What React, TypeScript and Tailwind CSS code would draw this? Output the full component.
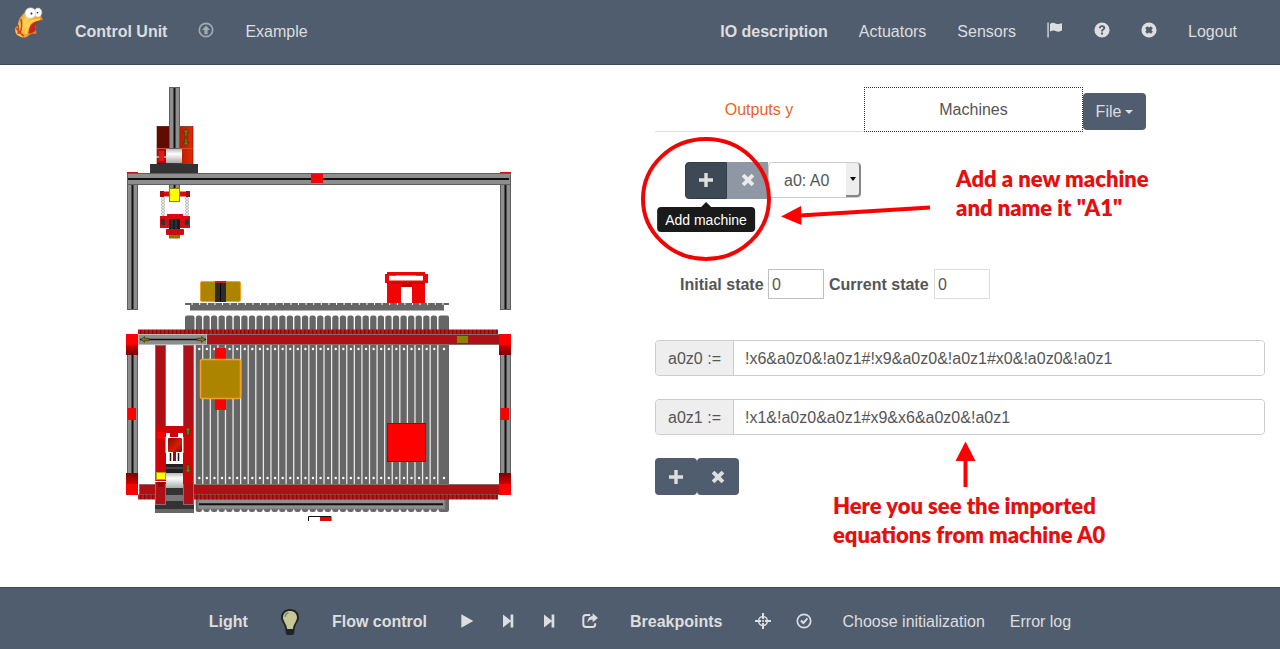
import { useState } from "react";
import type { ReactNode } from "react";

function Icon({ children, label }: { children: ReactNode; label?: string }) {
  return (
    <svg viewBox="0 0 16 16" className="size-4 shrink-0" fill="currentColor" role={label ? "img" : undefined} aria-label={label}>
      {children}
    </svg>
  );
}

const UploadIcon = () => (
  <Icon>
    <circle cx="8" cy="8" r="6.7" fill="none" stroke="currentColor" strokeWidth="1.7" />
    <path d="M8 3.4 12 8H9.6v4.300H6.400V8H4z" />
  </Icon>
);
const FlagIcon = () => (
  <Icon>
    <path d="M.4.6h1.3v15H.4zM3 1.9c2-1.4 3.6-1.3 5.4-.5 1.9.9 3.600.9 6.600-.1v7.300c-2.600 1.500-4.500 1.200-6.500.3C6.700 8.100 5.100 8.300 3 9.600z" />
  </Icon>
);
const QuestionIcon = () => (
  <Icon>
    <path
      fillRule="evenodd"
      d="M8 .4a7.600 7.600 0 1 1 0 15.200A7.600 7.600 0 0 1 8 .4zM4.900 6.200h2c0-.8.4-1.200 1.200-1.200.7 0 1.100.4 1.100.9 0 .6-.4.9-1 1.300-.8.600-1.200 1.100-1.200 2.200h1.900c0-.6.4-.9 1-1.300.8-.6 1.300-1.200 1.300-2.300 0-1.500-1.200-2.500-3-2.500-2 0-3.200 1.100-3.300 2.900zM7 10.600v2h2v-2z"
    />
  </Icon>
);
const CloseSignIcon = () => (
  <Icon>
    <path
      fillRule="evenodd"
      d="M8 .4a7.600 7.600 0 1 1 0 15.200A7.600 7.600 0 0 1 8 .4zM6.200 4.200 4.200 6.200 5.600 8l-1.400 1.800 2 2L8 10.400l1.800 1.400 2-2L10.400 8l1.400-1.800-2-2L8 5.600z"
    />
  </Icon>
);
const PlayIcon = () => (
  <Icon>
    <path d="M2.300 1.200 14.300 8l-12 6.800z" />
  </Icon>
);
const StepIcon = () => (
  <Icon>
    <path d="M3 1.500 10.600 7.400V1.500h2.700v13h-2.700V8.600L3 14.500z" />
  </Icon>
);
const ShareIcon = () => (
  <Icon>
    <path
      fill="none"
      stroke="currentColor"
      strokeWidth="2"
      d="M8.200 2H4Q1.300 2 1.300 4.700v6.600Q1.300 14 4 14h6.600q2.600 0 2.600-2.700v-1"
    />
    <path d="M10.600.3 16 4.900l-5.400 4.300V6.600C8 6.600 6.600 7.600 5.500 10c0-4 1.600-6.600 5.100-7z" />
  </Icon>
);
const CrosshairIcon = () => (
  <Icon>
    <path d="M7 0h2v6H7zM7 10h2v6H7zM0 7h6v2H0zM10 7h6v2h-6z" />
    <circle cx="8" cy="8" r="4.400" fill="none" stroke="currentColor" strokeWidth="1.500" />
    <circle cx="8" cy="8" r="1.100" />
  </Icon>
);
const OkCircleIcon = () => (
  <Icon>
    <circle cx="8" cy="8" r="6.700" fill="none" stroke="currentColor" strokeWidth="1.700" />
    <path d="m4.200 8.300 1.500-1.500 1.700 1.600 3.300-3.600 1.400 1.300-4.700 5.300z" />
  </Icon>
);
const PlusIcon = () => (
  <Icon>
    <path d="M6.300 1h3.400v5.300H15v3.400H9.700V15H6.300V9.700H1V6.300h5.300z" />
  </Icon>
);
const RemoveIcon = () => (
  <Icon>
    <path d="M4.400 1.700 8 5.300l3.600-3.600 2.700 2.700L10.700 8l3.600 3.600-2.700 2.700L8 10.700l-3.600 3.600-2.700-2.700L5.300 8 1.700 4.400z" />
  </Icon>
);

function Logo() {
  return (
    <svg viewBox="0 0 30 32" className="h-8 w-[30px]" role="img" aria-label="Home">
      <defs>
        <linearGradient id="fish" x1="0" x2="1" y1=".2" y2=".8">
          <stop offset="0" stopColor="#d9601a" />
          <stop offset=".35" stopColor="#ffd65a" />
          <stop offset=".65" stopColor="#f79a1e" />
          <stop offset="1" stopColor="#e4561c" />
        </linearGradient>
      </defs>
      <path d="M1 22c0-2 2-2 3-4 0-6 4-11 9-14 5-2 11 0 14 5l2 4c-4 0-6 1-8 3 0 4 1 6 1 9l1-1-1 3c-2-1-5-1-8 2-2 2-6 2-9 0-3-1-4-4-4-7z" fill="url(#fish)" />
      <path d="M27 13c-5 1-9 3-11 6-1 4-2 7-1 8l5-2c2-1 2-3 1-5 0-3 2-5 6-7z" fill="#c2281c" />
      <path d="M4 18c1 3 1 6 0 9M7 12c1 4 1 9-1 15M2 21c3 3 4 6 8 8" fill="none" stroke="#c9491a" strokeWidth="1.600" />
      <path d="m11 20 7-6 8-2M12 27c0-4 1-7 4-9" fill="none" stroke="#ffd54f" strokeWidth="2" />
      <ellipse cx="24" cy="5.500" rx="3.800" ry="4.500" fill="#fff" stroke="#c4c4c4" strokeWidth=".5" />
      <ellipse cx="16.500" cy="6" rx="5.500" ry="5.300" fill="#fff" stroke="#c4c4c4" strokeWidth=".5" />
      <circle cx="17.500" cy="6.500" r="1" fill="#222" />
      <circle cx="23.500" cy="5.800" r=".8" fill="#222" />
    </svg>
  );
}

function Bulb() {
  return (
    <svg viewBox="0 0 20 28" className="h-7 w-5">
      <path d="M10 1C4.500 1 1 4.500 1 9.500c0 4 3.500 6.500 4.300 11l.4 4Q6 27 8 27h4q2 0 2.300-2.500l.4-4c.8-4.500 4.300-7 4.300-11C19 4.500 15.500 1 10 1z" fill="#202425" />
      <path d="M10 3C5.800 3 3 5.700 3 9.500c0 3.500 3.500 6.500 4.200 11.500h5.600C13.500 16 17 13 17 9.500 17 5.700 14.200 3 10 3z" fill="#c5c795" />
      <path d="M4.500 9c0-3 1.500-4.500 4-5v1.500C7 6 6 7 6 9z" fill="#858968" />
    </svg>
  );
}

const PITCH = 7.58;
const slats = Array.from({ length: 32 }, (_, i) => 195.8 + i * PITCH);
const studs = [...Array.from({ length: 32 }, (_, i) => 199.3 + i * PITCH), 444];

function Profile({ x, y, w, h }: { x: number; y: number; w: number; h: number }) {
  const upright = h > w;
  return (
    <g>
      <rect x={x + 0.5} y={y + 0.5} width={w - 1} height={h - 1} fill="#8e8e8e" stroke="#606060" />
      {upright ? (
        <rect x={x + w / 2 - 1} y={y + 1} width="2" height={h - 2} fill="#111" />
      ) : (
        <rect x={x + 1} y={y + h / 2 - 1} width={w - 3} height="2" fill="#111" />
      )}
    </g>
  );
}

function Rail({ x, y, w, h }: { x: number; y: number; w: number; h: number }) {
  return <rect x={x + 0.5} y={y + 0.5} width={w - 1} height={h - 1} fill="#ae1015" stroke="#8a6a6a" />;
}

function Arrow({ x, y, turn }: { x: number; y: number; turn: number }) {
  return (
    <path
      transform={`translate(${x} ${y}) rotate(${turn})`}
      d="M0-4 3-.5H1.200V4h-2.400V-.5H-3z"
      fill="#7d7518"
      stroke="#3c3a08"
      strokeWidth=".7"
    />
  );
}

function Plant() {
  return (
    <svg viewBox="120 85 400 440" className="w-[400px] max-w-full" role="img" aria-label="Crane and conveyor model">
      <defs>
        <linearGradient id="redH">
          <stop offset="0" stopColor="#5a0800" />
          <stop offset="1" stopColor="#e62a00" />
        </linearGradient>
        <linearGradient id="motor" x2="1" y2="1">
          <stop offset="0" stopColor="#8a0a00" />
          <stop offset=".6" stopColor="#d81c04" />
          <stop offset="1" stopColor="#8a0a00" />
        </linearGradient>
        <linearGradient id="redDown" x2="0" y2="1">
          <stop offset="0" stopColor="#d40000" />
          <stop offset="1" stopColor="#780000" />
        </linearGradient>
        <linearGradient id="redUp" x2="0" y2="1">
          <stop offset="0" stopColor="#780000" />
          <stop offset="1" stopColor="#d40000" />
        </linearGradient>
        <linearGradient id="drum" x2="0" y2="1">
          <stop offset="0" stopColor="#bbb" />
          <stop offset=".35" stopColor="#fff" />
          <stop offset="1" stopColor="#aaa" />
        </linearGradient>
        <pattern id="teeth" width="4" height="6" patternUnits="userSpaceOnUse">
          <rect width="4" height="6" fill="#d60c12" />
          <rect width="1.400" height="6" fill="#6e1216" />
        </pattern>
        <pattern id="chain" width="4" height="3" patternUnits="userSpaceOnUse">
          <rect width="4" height="3" fill="#eee" />
          <path d="M0 0h2v1.500h2V3H2V1.500H0z" fill="#bbb" />
        </pattern>
      </defs>

      <rect x="157" y="126.500" width="36" height="38" fill="url(#redH)" stroke="#5a1208" strokeWidth=".6" />
      <rect x="157" y="126.500" width="12" height="21.500" fill="#620b02" />
      <path d="M157 148.500h36" stroke="#c9503c" />
      <rect x="157" y="149" width="10" height="14" fill="#b50c08" />
      <rect x="159" y="151" width="5" height="10" fill="#df1d18" />
      <path d="M156 157h3M164 157h3" stroke="#fff" />
      <Profile x={169} y={87} w={11} h={62} />
      <rect x="166" y="149" width="16" height="14" fill="url(#drum)" />
      <Arrow x={186} y={133} turn={0} />
      <Arrow x={186} y={142} turn={180} />
      <rect x="150" y="164" width="48" height="10" fill="#333" />

      <path d="M127 173h11M500 173h11" stroke="#c8141a" strokeWidth="2" />
      <Profile x={127} y={183} w={11} h={127} />
      <Profile x={500} y={183} w={11} h={127} />
      <Profile x={127} y={173} w={384} h={12} />
      <rect x="311" y="174" width="12" height="9" fill="#f00" />

      <Profile x={169} y={184} w={11} h={12} />
      <rect x="160" y="191.500" width="30" height="5" fill="#d40c10" />
      <rect x="160" y="191" width="4" height="6" fill="#9b1013" />
      <rect x="186" y="191" width="4" height="6" fill="#9b1013" />
      <rect x="169.500" y="188.500" width="10" height="13" fill="#ff0" stroke="#8b8500" />
      <rect x="161" y="197" width="4" height="19" fill="url(#chain)" />
      <rect x="185" y="197" width="4" height="19" fill="url(#chain)" />
      <path d="M160 216h7v-2h16v2h7v12h-30z" fill="#d40c10" />
      <rect x="161" y="219" width="4" height="6" fill="#333" />
      <rect x="185" y="219" width="4" height="6" fill="#333" />
      <rect x="169" y="219" width="11" height="10" fill="#1c1c1c" />
      <path d="M172 219v10M176 219v10" stroke="#444" />
      <rect x="166" y="229" width="18" height="6" rx="1" fill="#c90b0d" />
      <rect x="169" y="235" width="11" height="3.500" fill="#857800" />

      <rect x="200.500" y="281.500" width="40" height="20" rx="1.500" fill="#ad8400" stroke="#f0a22a" />
      <rect x="215" y="282" width="11" height="20" fill="#2b2b2b" />
      <path d="M215 282h11" stroke="#c4201b" strokeWidth="2" />
      <path d="M220.500 283v19" stroke="#000" />
      <path d="M385 274h2v-2h38v2h3v9h-3v20h-13v-16h-11v16h-14v-20h-2z" fill="#f00505" />
      <path d="M389 275.500h34v5h-34z" fill="#fff" />
      <path d="M389 275h7M416 275h7M387 283h38" stroke="#b80707" />
      <path d="M401 285.500h11" stroke="#a00000" strokeWidth="2" />
      <path d="M185 304h264" stroke="#666" strokeWidth="2" strokeDasharray="6.600 1" />
      <rect x="190" y="305" width="254" height="5.500" fill="#666" />

      <rect x="194" y="335" width="252" height="170" fill="#e8e8e8" />
      <rect x="185" y="315.500" width="9.500" height="20" rx="2" fill="#666" />
      {slats.map((x) => (
        <rect key={x} x={x} y="315.500" width="6.300" height="196.500" rx="2.500" fill="#666" />
      ))}
      <rect x="438.500" y="315.500" width="10.500" height="196.500" rx="2" fill="#666" />
      {[349, 478].map((y) => studs.map((x) => <circle key={`${x}-${y}`} cx={x} cy={y} r="1.200" fill="#fff" />))}

      <Profile x={127} y={350} w={11} h={130} />
      <Profile x={500} y={350} w={11} h={130} />
      <rect x="138" y="329.500" width="360" height="5" fill="url(#teeth)" />
      <Rail x={138} y={334} w={362} h={11} />
      <rect x="457" y="336" width="11" height="7" fill="#878500" />
      <rect x="138.500" y="334.500" width="68" height="10" fill="#8e8e8e" stroke="#bbb" />
      <path d="M140 339.500h66" stroke="#111" strokeWidth="1.500" />
      <Arrow x={145} y={339.5} turn={-90} />
      <Arrow x={201} y={339.5} turn={90} />

      <rect x="198" y="499" width="247" height="10" fill="#8e8e8e" stroke="#777" />
      <path d="M199 504.200h244" stroke="#111" strokeWidth="2" />
      <Rail x={139} y={484} w={361} h={11} />
      <rect x="138" y="494.500" width="360" height="5" fill="url(#teeth)" />

      {[126, 499].map((x) => (
        <g key={x}>
          <rect x={x} y="334" width="12" height="11" fill="#f00" />
          <rect x={x} y="345" width="12" height="10" fill="url(#redDown)" />
          <rect x={x} y="473" width="12" height="11" fill="url(#redUp)" />
          <rect x={x} y="484" width="12" height="11" fill="#f00" />
          <rect x={x + 1.5} y="408" width="8.500" height="12" fill="#f00" />
        </g>
      ))}

      <rect x="215" y="348" width="11" height="62" fill="#f00" />
      <rect x="200.500" y="359.500" width="40" height="39" rx="2" fill="#ad8400" stroke="#f0a22a" strokeWidth="1.500" />
      <rect x="387.500" y="423.500" width="38" height="38" fill="#f00" stroke="#8a1010" />

      <rect x="155" y="504" width="39" height="9" fill="#666" />
      <rect x="155" y="504" width="39" height="5" fill="#333" />
      <Rail x={155} y={345} w={11} h={160} />
      <Rail x={183} y={345} w={11} h={160} />
      <rect x="156" y="426" width="37" height="46" fill="#cb0508" />
      <rect x="156" y="470" width="10" height="14" fill="#cb0508" />
      <rect x="183" y="470" width="10" height="14" fill="#cb0508" />
      <rect x="157" y="432" width="8" height="7" fill="#fa0000" />
      <path d="M166 433h4v4h8v-4h5v31h-17z" fill="#fff" />
      <path d="M165.500 437v16M183.500 437v16" stroke="#999" />
      <rect x="168" y="438" width="14" height="14" rx="1" fill="url(#motor)" />
      <path d="M170.500 453v8M178.500 453v8" stroke="#2a1111" strokeWidth="1.500" />
      <path d="M174.500 452v9" stroke="#8a1515" strokeWidth="3" />
      <rect x="166" y="464" width="17" height="9" fill="#222" />
      <path d="M166 468h17" stroke="#666" />
      <rect x="166" y="473" width="17" height="15" fill="url(#drum)" />
      <rect x="166" y="488" width="17" height="7" fill="#333" />
      <rect x="166" y="495" width="17" height="6" fill="#777" />
      <rect x="166" y="501" width="17" height="4" fill="#333" />
      <rect x="156.500" y="472.500" width="9" height="7" fill="#ff0" stroke="#b0a000" />
      <path d="M154 481.500h12" stroke="#fff" />
      <rect x="158" y="482" width="6" height="5" fill="#8d0b0e" />
      <Arrow x={188} y={431} turn={0} />
      <Arrow x={188} y={469} turn={180} />

      <path d="M308.500 521v-4.500h22.500V521" fill="none" stroke="#111" />
      <rect x="320" y="517" width="11" height="4" fill="#d90d0d" />
    </svg>
  );
}

function Annotations() {
  return (
    <div className="pointer-events-none absolute left-0 top-0 z-20">
      <svg viewBox="640 65 640 522" className="h-[522px] w-[640px]" fill="#f00">
        <ellipse cx="706" cy="199" rx="63" ry="60" fill="none" stroke="#f00505" strokeWidth="4" />
        <path d="M800 215.500 930 207.500" stroke="#f00" strokeWidth="4" />
        <path d="m781 216.500 20-10.500.5 19z" />
        <path d="M965.500 460v27" stroke="#f00" strokeWidth="4" />
        <path d="m965.500 441.500 10 19.500h-20z" />
      </svg>
      <p className="absolute left-[316px] top-[99px] whitespace-nowrap font-[Lato,sans-serif] text-[22px] font-extrabold leading-[29px] text-[#e60f0f]">
        Add a new machine
        <br />
        and name it "A1"
      </p>
      <p className="absolute left-[193px] top-[426px] whitespace-nowrap font-[Lato,sans-serif] text-[22px] font-extrabold leading-[29px] text-[#e60f0f]">
        Here you see the imported
        <br />
        equations from machine A0
      </p>
    </div>
  );
}

function Equation({ name, initial }: { name: string; initial: string }) {
  const [value, setValue] = useState(initial);
  return (
    <div className="flex h-9 rounded border border-[#ccc]">
      <label htmlFor={name} className="flex w-[78px] items-center justify-center rounded-l border-r border-[#ccc] bg-[#eee] pt-0.5">
        {name} :=
      </label>
      <input id={name} value={value} onChange={(e) => setValue(e.target.value)} className="min-w-0 flex-1 rounded-r bg-white px-[11px] pt-0.5 outline-none" />
    </div>
  );
}

export default function App() {
  return (
    <div className="flex min-h-screen flex-col bg-white font-[Liberation_Sans,Arial,sans-serif] text-base text-[#555]">
      <header className="border-b border-[#3f4a58] bg-[#505d6e] text-[#dedede]">
        <nav className="flex h-16 items-center gap-[31px] pl-3.5 pr-[43px]">
          <a href="#home" className="mb-[18px]">
            <Logo />
          </a>
          <a href="#control" className="font-bold">Control Unit</a>
          <button aria-label="Upload" className="mb-1 opacity-60">
            <UploadIcon />
          </button>
          <a href="#example">Example</a>
          <div className="ml-auto flex items-center gap-[31px]">
            <a href="#io" className="font-bold">IO description</a>
            <a href="#actuators">Actuators</a>
            <a href="#sensors">Sensors</a>
            <button aria-label="Language" className="mb-1"><FlagIcon /></button>
            <button aria-label="Help" className="mb-1"><QuestionIcon /></button>
            <button aria-label="Close" className="mb-1"><CloseSignIcon /></button>
            <a href="#logout">Logout</a>
          </div>
        </nav>
      </header>

      <main className="grid flex-1 grid-cols-2">
        <section className="flex items-start justify-center pt-5">
          <Plant />
        </section>

        <section className="relative px-[15px] pt-[22px]">
          <div className="flex h-[45px] items-stretch">
            <button className="w-52 border-b border-[#ddd] pt-0.5 text-[#e8641b]">Outputs y</button>
            <button className="ml-px w-[219px] border border-dotted border-[#333]">Machines</button>
            <button className="mt-1.5 flex h-[37px] w-[63px] items-center justify-center gap-1 rounded bg-[#505d6e] text-[#dedede]">
              File
              <svg viewBox="0 0 8 4" className="h-1 w-2" fill="currentColor">
                <path d="M0 0h8L4 4z" />
              </svg>
            </button>
          </div>

          <div className="ml-[30px] mt-[30px] flex h-[37px]">
            <div className="relative">
              <button aria-label="Add machine" aria-describedby="add-tip" className="flex h-full w-[42px] items-center justify-center rounded-l border border-[#323d48] bg-[#3e4956] pb-0.5 text-[#dedede]">
                <PlusIcon />
              </button>
              <div className="absolute left-1/2 top-10 flex -translate-x-1/2 flex-col items-center">
                <svg viewBox="0 0 10 5" className="h-[5px] w-2.5" fill="#1a1a1a">
                  <path d="m5 0 5 5H0z" />
                </svg>
                <div id="add-tip" role="tooltip" className="flex h-[25px] items-center whitespace-nowrap rounded bg-[#1a1a1a] px-2 text-sm text-white">
                  Add machine
                </div>
              </div>
            </div>
            <button aria-label="Remove machine" className="flex w-[41px] items-center justify-center bg-[#8f97a4] pb-0.5 text-[#ebebeb]">
              <RemoveIcon />
            </button>
            <div className="relative h-9">
              <select aria-label="Machine" className="h-full w-[93px] appearance-none rounded border border-[#ccc] bg-white pl-[15px] pt-0.5 outline-none">
                <option>a0: A0</option>
              </select>
              <span className="pointer-events-none absolute inset-y-px right-0 flex w-[15px] items-center justify-center rounded-r-sm border-b-2 border-r-2 border-[#858585] bg-[#eee]">
                <svg viewBox="0 0 6 4" className="h-1 w-1.5">
                  <path d="M0 0h6L3 4z" />
                </svg>
              </span>
            </div>
          </div>

          <div className="ml-[25px] mt-[70px] flex h-[30px] items-center">
            <label htmlFor="initial" className="w-[88px] whitespace-nowrap pt-0.5 font-bold">Initial state</label>
            <input id="initial" defaultValue="0" className="h-full w-14 border border-[#bfbfbf] px-[3px] pt-0.5 outline-none" />
            <label htmlFor="current" className="ml-[5px] w-[105px] whitespace-nowrap pt-0.5 font-bold">Current state</label>
            <input id="current" defaultValue="0" readOnly className="h-full w-14 border border-[#ddd] px-[3px] pt-0.5 outline-none" />
          </div>

          <div className="mt-[41px] flex flex-col gap-[23px]">
            <Equation name="a0z0" initial="!x6&a0z0&!a0z1#!x9&a0z0&!a0z1#x0&!a0z0&!a0z1" />
            <Equation name="a0z1" initial="!x1&!a0z0&a0z1#x9&x6&a0z0&!a0z1" />
            <div className="flex h-[37px] text-[#dedede]">
              <button aria-label="Add equation" className="flex w-[42px] items-center justify-center rounded bg-[#505d6e]"><PlusIcon /></button>
              <button aria-label="Remove equation" className="flex w-[42px] items-center justify-center rounded bg-[#505d6e]"><RemoveIcon /></button>
            </div>
          </div>

          <Annotations />
        </section>
      </main>

      <footer className="border-t border-[#3f4a58] bg-[#505d6e] text-[#dedede]">
        <div className="flex h-[61px] items-center justify-center gap-8 pt-1.5">
          <span className="font-bold">Light</span>
          <button aria-label="Toggle light"><Bulb /></button>
          <span className="font-bold">Flow control</span>
          <div className="flex items-center gap-[25px] pb-0.5">
            <button aria-label="Play"><PlayIcon /></button>
            <button aria-label="Step"><StepIcon /></button>
            <button aria-label="Step to end"><StepIcon /></button>
            <button aria-label="Export"><ShareIcon /></button>
          </div>
          <span className="font-bold">Breakpoints</span>
          <div className="flex items-center gap-[25px]">
            <button aria-label="Set breakpoint" className="mb-0.5"><CrosshairIcon /></button>
            <button aria-label="Confirm breakpoint" className="mb-0.5"><OkCircleIcon /></button>
            <a href="#init" className="ml-1.5">Choose initialization</a>
            <a href="#log">Error log</a>
          </div>
        </div>
      </footer>
    </div>
  );
}
